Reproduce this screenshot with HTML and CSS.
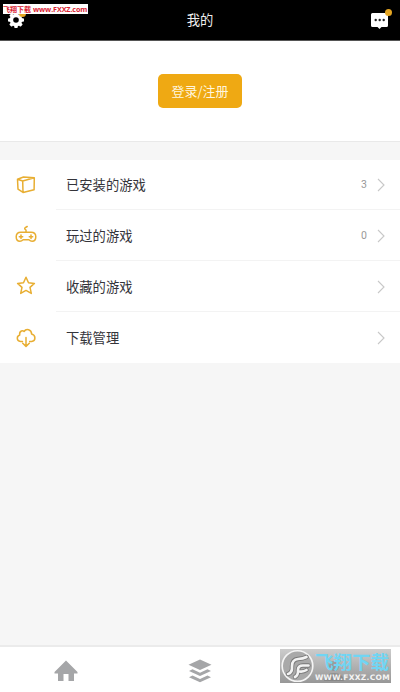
FILE: index.html
```html
<!DOCTYPE html>
<html lang="zh-CN">
<head>
<meta charset="utf-8">
<title>我的</title>
<link rel="stylesheet" href="styles.css">
</head>
<body>
<div class="app">
  <header class="topbar">
    <svg class="gear" width="18" height="18" viewBox="0 0 18 18"><g fill="#fff"><circle cx="9" cy="9" r="6.3"/><g id="teeth"><rect x="7.2" y="1" width="3.6" height="16" rx="1"/><rect x="1" y="7.2" width="16" height="3.6" rx="1"/></g><use href="#teeth" transform="rotate(45 9 9)"/></g><circle cx="9" cy="9" r="2.8" fill="#000"/></svg>
    <i class="dot dot-left"></i>
    <h1>我的</h1>
    <svg class="chat" width="18" height="17" viewBox="0 0 18 17"><path d="M1.500 0h14Q17 0 17 1.500v11q0 1.500-1.500 1.500h-5l-2 2-2-2h-5Q0 14 0 12.500v-11Q0 0 1.500 0z" fill="#fff"/><g fill="#222"><circle cx="4.700" cy="7" r="1.200"/><circle cx="8.700" cy="7" r="1.200"/><circle cx="12.700" cy="7" r="1.200"/></g></svg>
    <i class="dot dot-right"></i>
    <div class="ribbon"><span class="ribbon-cn">飞翔下载</span><span class="ribbon-url">www.FXXZ.com</span></div>
  </header>
  <section class="account"><button class="login">登录/注册</button></section>
  <nav class="list">
    <div class="row">
      <svg class="icon" viewBox="0 0 22 22"><path d="M2.500 5.200 8.500 3l10.800.8-.2 12L8 18.400l-5-3.200zM2.500 5.200 7.700 7l11.600-3.200M7.700 7 8 18.400"/></svg>
      <div class="cell"><span class="label">已安装的游戏</span><span class="count">3</span><svg class="chevron" viewBox="0 0 8 14"><path d="m1 1 6 6-6 6"/></svg></div>
    </div>
    <div class="row">
      <svg class="icon" viewBox="0 0 22 22"><path d="M6 7.300h10q4.800 0 4.800 4.400t-3.700 4.500q-1.700 0-3.200-1.500H8.100q-1.500 1.500-3.200 1.500-3.700 0-3.700-4.500T6 7.300zM11 7V5Q8.800 3.500 10.300 2.700l1.900-1.200M6 10v3.400M4.300 11.700h3.400M16 10v3.400M14.300 11.700h3.400"/></svg>
      <div class="cell"><span class="label">玩过的游戏</span><span class="count">0</span><svg class="chevron" viewBox="0 0 8 14"><path d="m1 1 6 6-6 6"/></svg></div>
    </div>
    <div class="row">
      <svg class="icon" viewBox="0 0 22 22"><path d="m11 1.200 2.500 5.500 5.900.7-4.400 4 1.300 6-5.300-3-5.300 3 1.300-6-4.400-4 5.900-.7z"/></svg>
      <div class="cell"><span class="label">收藏的游戏</span><svg class="chevron" viewBox="0 0 8 14"><path d="m1 1 6 6-6 6"/></svg></div>
    </div>
    <div class="row">
      <svg class="icon" viewBox="0 0 22 22"><path d="M7.500 14.500h-2Q2.300 14 2.300 11.200q0-2.300 2.400-3.200-.5-3 1.700-4 1.500-.6 2.700.5 1.500-2.500 4.500-1.700 3 .8 3 4.200 3.300.8 3.300 3.900 0 3-3.300 3.600h-2M11 10.500v8.800M7.700 16.200l3.300 3.200 3.300-3.200"/></svg>
      <div class="cell"><span class="label">下载管理</span><svg class="chevron" viewBox="0 0 8 14"><path d="m1 1 6 6-6 6"/></svg></div>
    </div>
  </nav>
  <footer class="tabs">
    <div class="tab"><svg width="24" height="24" viewBox="0 0 24 24"><path d="M12 1.500 23.500 13v1.500H20V22h-5.500v-7h-5v7H4v-7.500H.5V13z"/></svg></div>
    <div class="tab"><svg width="24" height="24" viewBox="0 0 24 24"><path d="m12 .5 11.500 5.300L12 11 .5 5.800zM1 12l3.500-1.700L12 13.700l7.500-3.400L23 12l-11 5zM1 18.200l3.500-1.700 7.500 3.400 7.500-3.400 3.500 1.700-11 5z"/></svg></div>
    <div class="tab tab-me"><svg width="24" height="24" viewBox="0 0 24 24"><circle cx="12" cy="7" r="5"/><path d="M2 22q1-8 10-8t10 8z"/></svg></div>
  </footer>
  <div class="watermark">
    <svg class="seal" width="34" height="34" viewBox="0 0 34 34"><circle cx="17.500" cy="17" r="15.300" fill="#a9a9a9" stroke="#f4f4f4" stroke-width="1.600"/><g fill="none" stroke-linecap="round"><g stroke="#777" stroke-width="4.400"><path d="M8 25q4.500-1 4-8 .2-6.500 6-7 5-.2 8.500-2"/><path d="M15 28q3.500-2 3-7 0-4.500 5-4.500h5.500"/><path d="M19.500 22.500q4 .5 7-1.500"/></g><g stroke="#f2f2f2" stroke-width="2.700"><path d="M8 25q4.500-1 4-8 .2-6.500 6-7 5-.2 8.500-2"/><path d="M15 28q3.500-2 3-7 0-4.500 5-4.500h5.500"/><path d="M19.500 22.500q4 .5 7-1.500"/></g></g></svg>
    <div class="brand"><span class="brand-cn">飞翔下载</span><span class="brand-url">WWW.FXXZ.COM</span></div>
  </div>
</div>
</body>
</html>
```
FILE: styles.css
```css
* { box-sizing: border-box; }
body {
  margin: 0;
  font-family: "Noto Sans CJK SC", sans-serif;
  color: #34343a;
}
.app {
  position: relative;
  display: flex;
  flex-direction: column;
  height: 692px;
  overflow: hidden;
  background: #f6f6f6;
}
.topbar {
  position: relative;
  display: flex;
  align-items: center;
  justify-content: space-between;
  flex: none;
  height: 41px;
  padding: 0 11px 0 7px;
  background: #000;
  border-bottom: 1px solid #555;
}
h1 {
  margin: 0 0 0 4px;
  font-size: 13.3px;
  font-weight: 400;
  line-height: 20px;
  color: #eee;
}
.chat { margin-top: 3px; }
.dot {
  position: absolute;
  width: 7px;
  height: 7px;
  border-radius: 50%;
  background: #e4a522;
}
.dot-left { left: 19px; top: 10px; }
.dot-right { left: 385px; top: 9px; }
.ribbon {
  position: absolute;
  left: 3px;
  top: 4px;
  display: flex;
  align-items: center;
  width: 85px;
  height: 10px;
  background: #fff;
  color: #d92332;
  font-weight: 700;
  line-height: 10px;
  white-space: nowrap;
}
.ribbon-cn { width: 30px; font-size: 7px; }
.ribbon-url {
  font-family: "Open Sans", sans-serif;
  font-size: 7.2px;
  letter-spacing: -.1px;
}
.account {
  display: flex;
  justify-content: center;
  align-items: center;
  flex: none;
  height: 101px;
  background: #fff;
  border-bottom: 1px solid #e9e9e9;
}
.login {
  width: 84px;
  height: 34px;
  padding: 0;
  border: 0;
  border-radius: 5px;
  background: #efa913;
  color: #fff6df;
  font: 400 13px/34px "Noto Sans CJK SC", sans-serif;
}
.list {
  flex: none;
  margin-top: 18px;
  background: #fff;
}
.row {
  display: flex;
  align-items: center;
  height: 51px;
  padding-left: 15px;
}
.row:first-child { height: 50px; }
.icon {
  width: 22px;
  height: 22px;
  fill: none;
  stroke: #e8ae32;
  stroke-width: 1.5;
  stroke-linejoin: round;
  stroke-linecap: round;
}
.cell {
  display: flex;
  align-items: center;
  flex: 1;
  height: 100%;
  margin-left: 19px;
  padding: 0 15px 0 10px;
  border-bottom: 1px solid #f3f3f3;
}
.row:nth-child(2), .row:nth-child(3) { padding-top: 1px; }
.row:nth-child(2) .cell, .row:nth-child(3) .cell { padding-top: 1px; }
.row:last-child .cell { border-bottom: 0; }
.label { flex: 1; font-size: 13.3px; line-height: 20px; }
.count {
  margin-right: 10px;
  font: 10.5px/14px Roboto, sans-serif;
  color: #999;
}
.chevron {
  width: 8px;
  height: 14px;
  fill: none;
  stroke: #c8c8c8;
  stroke-width: 1.1;
}
.tabs {
  display: flex;
  flex: none;
  height: 47px;
  margin-top: auto;
  background: #fff;
  border-top: 2px solid #ebebeb;
}
.tab {
  display: flex;
  align-items: center;
  justify-content: center;
  width: 132px;
  padding-top: 2px;
}
.tab:nth-child(2) { width: 136px; }
.tab svg { fill: #a5a6a8; }
.tab-me svg { fill: #333; }
.watermark {
  position: absolute;
  left: 280px;
  top: 649px;
  display: flex;
  width: 111px;
  height: 34px;
  background: linear-gradient(rgba(195, 195, 195, .85), rgba(140, 140, 140, .9));
}
.seal { flex: none; }
.brand {
  display: flex;
  flex-direction: column;
  padding-left: 1px;
  white-space: nowrap;
}
.brand-cn {
  height: 24px;
  font-size: 18.5px;
  font-weight: 700;
  line-height: 24px;
  color: #70d5f3;
}
.brand-url {
  font: 700 7.5px/9px "DejaVu Sans", sans-serif;
  letter-spacing: .3px;
  color: #f4f4f4;
}
```
